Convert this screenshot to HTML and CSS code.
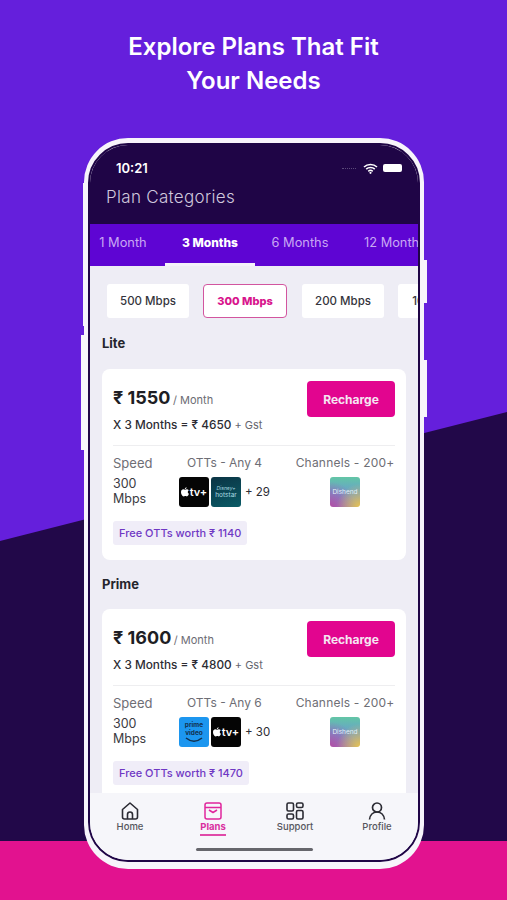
FILE: index.html
```html
<!DOCTYPE html>
<html lang="en">
<head>
<meta charset="utf-8">
<title>Explore Plans</title>
<link rel="stylesheet" href="styles.css">
</head>
<body>
<main class="page">
  <h1 class="headline">Explore Plans That Fit<br>Your Needs</h1>
  <div class="phone">
    <span class="btn btn-l1"></span><span class="btn btn-l2"></span><span class="btn btn-r1"></span><span class="btn btn-r2"></span>
    <div class="screen">
      <header class="top">
        <div class="status">
          <span class="time">10:21</span>
          <span class="status-icons">
            <span class="dots"></span>
            <svg width="15" height="11" viewBox="0 0 15 11"><path d="M1 4a9.5 9.5 0 0 1 13 0M3.2 6.2a6.3 6.3 0 0 1 8.6 0M5.3 8.3a3.2 3.2 0 0 1 4.4 0" fill="none" stroke="#fff" stroke-width="1.6"/><circle cx="7.5" cy="9.8" r="1.1" fill="#fff"/></svg>
            <span class="battery"></span>
          </span>
        </div>
        <div class="title">Plan Categories</div>
      </header>
      <nav class="tabs">
        <span class="tab">1 Month</span>
        <span class="tab tab-on">3 Months</span>
        <span class="tab">6 Months</span>
        <span class="tab">12 Months</span>
      </nav>
      <div class="content">
        <div class="chips">
          <span class="chip">500 Mbps</span>
          <span class="chip chip-on">300 Mbps</span>
          <span class="chip">200 Mbps</span>
          <span class="chip">100 Mbps</span>
        </div>
        <section class="plan">
          <h2 class="plan-name">Lite</h2>
          <article class="card">
            <div class="row-top">
              <div class="price"><b>₹ 1550</b> <span>/ Month</span></div>
              <button class="recharge">Recharge</button>
            </div>
            <p class="total">X 3 Months = ₹ 4650 <span>+ Gst</span></p>
            <hr class="rule">
            <div class="specs">
              <div class="spec-speed">
                <div class="label label-speed">Speed</div>
                <div class="speed">300<br>Mbps</div>
              </div>
              <div class="spec-ott">
                <div class="label">OTTs - Any 4</div>
                <div class="logos">
                  <span class="logo logo-tv"><svg class="apple" viewBox="0 0 10 12"><path d="M7 0c.1 1.100-.9 2.400-2.200 2.400C4.700 1.200 5.800.1 7 0zM5 3.100c.6 0 1.300-.6 2.400-.6.8 0 1.800.4 2.300 1.200-1.900 1.200-1.500 3.800.3 4.600-.5 1.300-1.500 3.200-2.700 3.200-.8 0-1.100-.5-2.100-.5s-1.400.5-2.100.5C1.700 11.500 0 8.700 0 6.200 0 3.800 1.500 2.600 2.900 2.600c.9 0 1.600.5 2.100.5z" fill="#fff"/></svg>tv+</span>
                  <span class="logo logo-hotstar"><i>Disney+</i><em>hotstar</em></span>
                  <span class="more">+ 29</span>
                </div>
              </div>
              <div class="spec-ch">
                <div class="label">Channels - 200+</div>
                <span class="logo logo-ch">Dishend</span>
              </div>
            </div>
            <div class="worth">Free OTTs worth ₹ 1140</div>
          </article>
        </section>
        <section class="plan">
          <h2 class="plan-name">Prime</h2>
          <article class="card">
            <div class="row-top">
              <div class="price"><b>₹ 1600</b> <span>/ Month</span></div>
              <button class="recharge">Recharge</button>
            </div>
            <p class="total">X 3 Months = ₹ 4800 <span>+ Gst</span></p>
            <hr class="rule">
            <div class="specs">
              <div class="spec-speed">
                <div class="label label-speed">Speed</div>
                <div class="speed">300<br>Mbps</div>
              </div>
              <div class="spec-ott">
                <div class="label">OTTs - Any 6</div>
                <div class="logos">
                  <span class="logo logo-prime"><i>prime<br>video</i><svg width="20" height="6" viewBox="0 0 20 6"><path d="M2 1c5 4 11 4 16 0" fill="none" stroke="#12314f" stroke-width="1.600"/></svg></span>
                  <span class="logo logo-tv"><svg class="apple" viewBox="0 0 10 12"><path d="M7 0c.1 1.100-.9 2.400-2.200 2.400C4.700 1.200 5.800.1 7 0zM5 3.100c.6 0 1.300-.6 2.400-.6.8 0 1.800.4 2.300 1.200-1.900 1.200-1.500 3.800.3 4.600-.5 1.300-1.500 3.200-2.700 3.200-.8 0-1.100-.5-2.100-.5s-1.400.5-2.100.5C1.700 11.500 0 8.700 0 6.200 0 3.800 1.500 2.600 2.900 2.600c.9 0 1.600.5 2.100.5z" fill="#fff"/></svg>tv+</span>
                  <span class="more">+ 30</span>
                </div>
              </div>
              <div class="spec-ch">
                <div class="label">Channels - 200+</div>
                <span class="logo logo-ch">Dishend</span>
              </div>
            </div>
            <div class="worth">Free OTTs worth ₹ 1470</div>
          </article>
        </section>
      </div>
      <footer class="bottom">
        <div class="nav">
          <div class="nav-item nav-home">
            <svg width="20" height="20" viewBox="0 0 20 20" fill="none" stroke="#2b2b33" stroke-width="1.600" stroke-linejoin="round"><path d="M2.500 8.500 10 2l7.500 6.500V16a2 2 0 0 1-2 2h-11a2 2 0 0 1-2-2z"/><path d="M7.500 18v-4.500a2.500 2.500 0 0 1 5 0V18"/></svg>
            <span>Home</span>
          </div>
          <div class="nav-item nav-on">
            <svg width="20" height="20" viewBox="0 0 20 20" fill="none" stroke="#e0269c" stroke-width="1.500" stroke-linejoin="round"><rect x="2" y="2" width="16" height="16" rx="2"/><path d="M2 6.500h16M6 9l4 2.500L14 9"/></svg>
            <span>Plans</span>
            <u class="nav-line"></u>
          </div>
          <div class="nav-item">
            <svg width="20" height="20" viewBox="0 0 20 20" fill="none" stroke="#2b2b33" stroke-width="1.600"><rect x="2" y="2" width="6.500" height="8" rx="1.500"/><rect x="11.500" y="2" width="6.500" height="4.500" rx="1.500"/><rect x="2" y="13" width="6.500" height="5" rx="1.500"/><rect x="11.500" y="9.500" width="6.500" height="8.500" rx="1.500"/></svg>
            <span>Support</span>
          </div>
          <div class="nav-item">
            <svg width="20" height="20" viewBox="0 0 20 20" fill="none" stroke="#2b2b33" stroke-width="1.700"><circle cx="10" cy="6.500" r="4.500"/><path d="M2.500 18.500c.5-4.500 3.500-7.500 7.500-7.500s7 3 7.500 7.500"/></svg>
            <span>Profile</span>
          </div>
        </div>
        <div class="home-bar"></div>
      </footer>
    </div>
  </div>
</main>
</body>
</html>
```
FILE: styles.css
```css
* { box-sizing: border-box; }
html, body { margin: 0; padding: 0; }
body { font-family: Inter, "Liberation Sans", sans-serif; }
.page {
  position: relative;
  width: 507px;
  height: 900px;
  overflow: hidden;
  background: #651fdc;
  padding-top: 30px;
}
.page::before {
  content: "";
  position: absolute;
  inset: 0;
  background: #220849;
  clip-path: polygon(0 541px, 507px 412px, 507px 900px, 0 900px);
}
.page::after {
  content: "";
  position: absolute;
  left: 0; right: 0; bottom: 0;
  height: 59px;
  background: #e2128f;
}
.headline {
  position: relative;
  z-index: 1;
  margin: 0;
  height: 78px;
  text-align: center;
  color: #fff;
  font-size: 24px;
  line-height: 34px;
  font-weight: 600;
}
.phone {
  position: relative;
  z-index: 1;
  width: 340px;
  height: 731px;
  margin: 30px 0 0 84px;
  border: solid #f7f4fb;
  border-width: 5px 4px 7px;
  border-radius: 44px;
  background: #f7f4fb;
}
.btn { position: absolute; background: #f7f4fb; }
.btn-l1 { left: -5px; top: 40px; width: 3px; height: 143px; }
.btn-l2 { left: -7px; top: 192px; width: 5px; height: 115px; }
.btn-r1 { right: -7px; top: 117px; width: 5px; height: 43px; }
.btn-r2 { right: -7px; top: 217px; width: 5px; height: 57px; }
.screen {
  display: flex;
  flex-direction: column;
  height: 100%;
  border: 2px solid #1f0546;
  border-radius: 40px;
  overflow: hidden;
  background: #eeedf5;
}
.top { height: 79px; background: #1f0546; flex: none; }
.status {
  display: flex;
  justify-content: space-between;
  align-items: center;
  padding: 15px 16px 0 26px;
  height: 31px;
  color: #fff;
}
.time { font-size: 13px; font-weight: 600; }
.status-icons { display: flex; align-items: center; gap: 5px; }
.dots { width: 14px; border-top: 1px dotted #5b4a7a; margin-right: 2px; }
.battery { width: 19px; height: 8px; border-radius: 2px; background: #fff; }
.title { padding: 11px 0 0 16px; font-size: 17px; letter-spacing: .3px; color: #cfc8dd; font-weight: 300; }
.tabs {
  display: flex;
  flex: none;
  height: 42px;
  background: #5e05d3;
  overflow: hidden;
}
.tab {
  flex: none;
  width: 90px;
  height: 42px;
  line-height: 38px;
  text-align: center;
  font-size: 12.800px;
  color: #c9a8f3;
  white-space: nowrap;
}
.tab:first-child { width: 75px; text-indent: -9px; }
.tab:last-child { text-indent: 10px; }
.tab-on { color: #fff; font-size: 12px; font-weight: 800; border-bottom: 3px solid #f5f2fa; }
.content { flex: 1; min-height: 0; overflow: hidden; padding: 18px 0 0 12px; }
.chips { display: flex; gap: 14px; margin-left: 5px; width: 320px; overflow: hidden; }
.chip {
  flex: none;
  width: 82px;
  height: 34px;
  line-height: 34px;
  text-align: center;
  font-size: 11.500px;
  font-weight: 500;
  color: #34343c;
  background: #fff;
  border-radius: 3px;
  white-space: nowrap;
}
.chip-on {
  width: 84px;
  margin-right: 1px;
  line-height: 32px;
  color: #d8148c;
  font-size: 11px;
  font-weight: 800;
  border: 1.500px solid #d2559f;
  border-radius: 4px;
}
.plan-name { margin: 17px 0 18px; font-size: 13px; line-height: 16px; font-weight: 700; color: #25252c; }
.plan + .plan .plan-name { margin: 16px 0 17px; }
.card { width: 304px; height: 191px; padding: 12px 11px 14px; background: #fff; border-radius: 8px; }
.row-top { display: flex; justify-content: space-between; align-items: flex-start; height: 36px; }
.price { padding-top: 6px; color: #1e1e24; }
.price b { font-size: 18px; font-weight: 700; }
.price span { font-size: 11px; color: #6c6c74; margin-left: -2px; }
.recharge {
  width: 88px;
  height: 36px;
  border: 0;
  border-radius: 4px;
  background: #e2058f;
  color: #f5e6f2;
  font: 700 12px Inter, sans-serif;
}
.total { margin: 0; line-height: 16px; font-size: 11.800px; font-weight: 500; color: #2c2c33; }
.total span { font-size: 11px; font-weight: 400; color: #66666e; }
.rule { margin: 12px 0 8px; border: 0; border-top: 1px solid #eeeef0; }
.specs { display: grid; grid-template-columns: 61px 1fr 106px; height: 52px; padding-top: 1px; }
.label { height: 16px; line-height: 16px; font-size: 12px; color: #6e6e75; white-space: nowrap; }
.label-speed { font-size: 13px; }
.spec-ott { margin-left: 5px; }
.spec-ott .label { margin-left: 8px; }
.spec-ch { text-align: center; margin-right: -6px; }
.spec-ch .label { margin-bottom: 6px; letter-spacing: .2px; }
.speed { margin-top: 5px; font-size: 12.500px; line-height: 15px; color: #3b3b42; }
.logos { display: flex; align-items: center; gap: 2px; margin-top: 6px; }
.logo {
  display: inline-flex;
  align-items: center;
  justify-content: center;
  flex: none;
  width: 30px;
  height: 30px;
  border-radius: 3px;
  overflow: hidden;
  color: #fff;
}
.logo-tv { background: #050505; font-size: 11px; font-weight: 600; gap: 1px; }
.apple { width: 8px; height: 10px; }
.logo-hotstar {
  flex-direction: column;
  background: linear-gradient(160deg, #0b3344, #0a5b66);
  color: #a9dbe2;
}
.logo-hotstar i { font-size: 5px; font-style: italic; line-height: 7px; }
.logo-hotstar em { font-size: 6.500px; font-style: normal; line-height: 7px; }
.logo-prime { flex-direction: column; background: #1c96ef; color: #12314f; }
.logo-prime i { font-size: 6.500px; font-weight: 700; font-style: normal; line-height: 8px; text-align: center; }
.logo-ch {
  font-size: 6.500px;
  color: #e4eef8;
  background:
    radial-gradient(circle at 100% 100%, #e8c54d 0, rgba(232,197,77,0) 55%),
    radial-gradient(circle at 0 100%, #b14fa5 0, rgba(177,79,165,0) 60%),
    linear-gradient(180deg, #62c6a5, #6b9ccf 55%, #8a83c8);
}
.more { margin-left: 2px; font-size: 11.500px; color: #2c2c33; white-space: nowrap; }
.worth {
  display: inline-block;
  margin-top: 15px;
  height: 24px;
  padding: 0 6px;
  line-height: 24px;
  border-radius: 3px;
  background: #f0edf8;
  color: #6f38c4;
  font-size: 11px;
  font-weight: 500;
  white-space: nowrap;
}
.bottom { flex: none; height: 67px; background: #f6f6fa; }
.nav { display: grid; grid-template-columns: repeat(4, 82px); padding-top: 8px; height: 55px; }
.nav-item { display: flex; flex-direction: column; align-items: center; font-size: 9.500px; line-height: 12px; font-weight: 500; color: #55555c; }
.nav-home { padding-right: 2px; }
.nav-on { color: #d92f9f; font-weight: 700; }
.nav-line { display: block; width: 26px; height: 2px; margin-top: 1px; background: #e04aa9; }
.home-bar { width: 117px; height: 3px; margin: 0 auto; border-radius: 2px; background: #66666c; }
```
